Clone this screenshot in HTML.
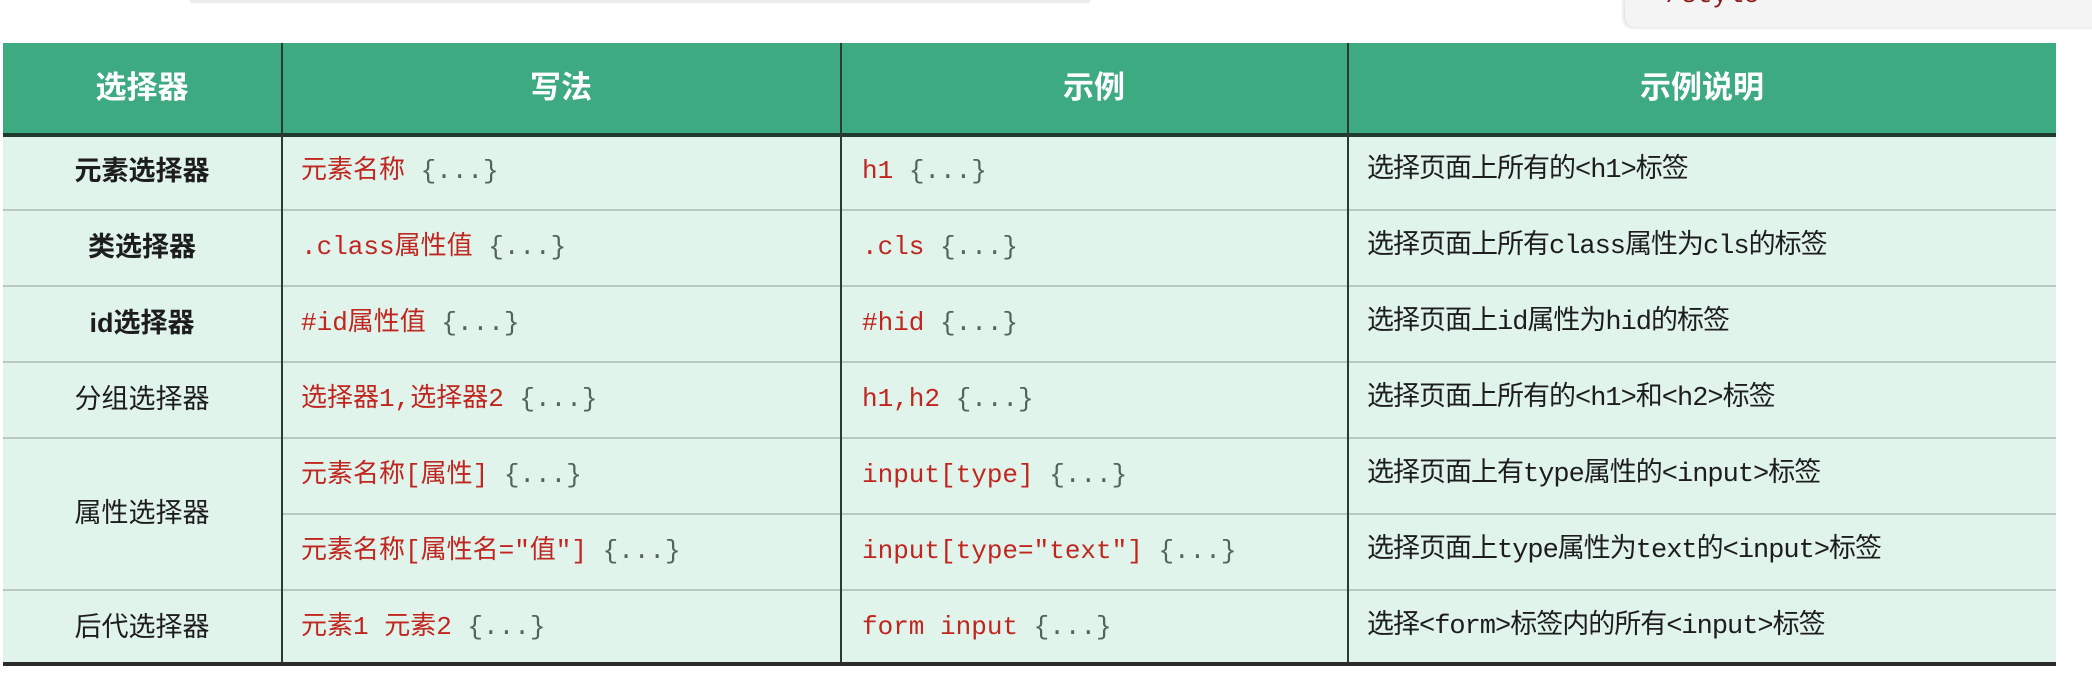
<!DOCTYPE html>
<html><head><meta charset="utf-8"><style>
html,body{margin:0;padding:0;width:2092px;height:675px;overflow:hidden;background:#fff;position:relative;font-family:"Liberation Sans","Noto Sans CJK SC",sans-serif;}
.codebox{position:absolute;left:1625px;top:-10px;width:480px;height:37px;background:#f4f4f4;border-radius:10px;box-shadow:-2px 1px 3px rgba(0,0,0,0.12);}
.codebox span{position:absolute;left:25px;top:-10px;font:26px "Liberation Mono",monospace;color:#8b1a1a;}
.topline{position:absolute;left:190px;top:0;width:900px;height:3px;background:#ececec;}
.tbl{position:absolute;left:3px;top:43px;width:2053px;height:622px;background:#e1f4ec;}
.hdr{position:absolute;left:0;top:0;width:100%;height:90px;background:#3daa82;border-bottom:4px solid #1f3b30;}
.vl{position:absolute;top:0;width:2px;height:622px;background:#2c3a34;}
.hl{position:absolute;height:2px;background:#b8c8c0;}
.c{position:absolute;font-size:27px;color:#1d1d1d;line-height:40px;white-space:nowrap;}
.h{color:#fff;font-weight:bold;font-size:31px;text-align:center;}
.b{font-weight:bold;}
.m{font-family:"Liberation Mono","Noto Sans CJK SC",monospace;color:#c0261f;font-size:26px;}
.d{font-family:"Liberation Mono","Noto Sans CJK SC",monospace;font-size:27px;letter-spacing:-1px;}
.g{color:#55625d;}
.bot{position:absolute;left:3px;top:662px;width:2053px;height:4px;background:#2c2c2c;}
</style></head><body>
<div class="topline"></div>
<div class="codebox"><span>&lt;/style&gt;</span></div>
<div class="tbl">
<div class="hdr"></div>
<div class="hl" style="left:0;width:2053px;top:166px"></div>
<div class="hl" style="left:0;width:2053px;top:242px"></div>
<div class="hl" style="left:0;width:2053px;top:318px"></div>
<div class="hl" style="left:0;width:2053px;top:394px"></div>
<div class="hl" style="left:278px;width:1775px;top:470px"></div>
<div class="hl" style="left:0;width:2053px;top:546px"></div>
<div class="vl" style="left:278px"></div>
<div class="vl" style="left:837px"></div>
<div class="vl" style="left:1344px"></div>
<div class="c h" style="left:0;width:278px;top:25px">选择器</div>
<div class="c h" style="left:279px;width:558px;top:25px">写法</div>
<div class="c h" style="left:838px;width:506px;top:25px">示例</div>
<div class="c h" style="left:1345px;width:708px;top:25px">示例说明</div>
</div>
<div style="position:absolute;left:3px;top:133px;">
<div class="c b" style="left:0;width:278px;text-align:center;top:18px">元素选择器</div>
<div class="c b" style="left:0;width:278px;text-align:center;top:94px">类选择器</div>
<div class="c b" style="left:0;width:278px;text-align:center;top:170px">id选择器</div>
<div class="c" style="left:0;width:278px;text-align:center;top:246px">分组选择器</div>
<div class="c" style="left:0;width:278px;text-align:center;top:360px">属性选择器</div>
<div class="c" style="left:0;width:278px;text-align:center;top:474px">后代选择器</div>

<div class="c m" style="left:298px;top:18px">元素名称 <span class="g">{...}</span></div>
<div class="c m" style="left:298px;top:94px">.class属性值 <span class="g">{...}</span></div>
<div class="c m" style="left:298px;top:170px">#id属性值 <span class="g">{...}</span></div>
<div class="c m" style="left:298px;top:246px">选择器1,选择器2 <span class="g">{...}</span></div>
<div class="c m" style="left:298px;top:322px">元素名称[属性] <span class="g">{...}</span></div>
<div class="c m" style="left:298px;top:398px">元素名称[属性名="值"] <span class="g">{...}</span></div>
<div class="c m" style="left:298px;top:474px">元素1 元素2 <span class="g">{...}</span></div>

<div class="c m" style="left:859px;top:18px">h1 <span class="g">{...}</span></div>
<div class="c m" style="left:859px;top:94px">.cls <span class="g">{...}</span></div>
<div class="c m" style="left:859px;top:170px">#hid <span class="g">{...}</span></div>
<div class="c m" style="left:859px;top:246px">h1,h2 <span class="g">{...}</span></div>
<div class="c m" style="left:859px;top:322px">input[type] <span class="g">{...}</span></div>
<div class="c m" style="left:859px;top:398px">input[type="text"] <span class="g">{...}</span></div>
<div class="c m" style="left:859px;top:474px">form input <span class="g">{...}</span></div>

<div class="c d" style="left:1364px;top:18px">选择页面上所有的&lt;h1&gt;标签</div>
<div class="c d" style="left:1364px;top:94px">选择页面上所有class属性为cls的标签</div>
<div class="c d" style="left:1364px;top:170px">选择页面上id属性为hid的标签</div>
<div class="c d" style="left:1364px;top:246px">选择页面上所有的&lt;h1&gt;和&lt;h2&gt;标签</div>
<div class="c d" style="left:1364px;top:322px">选择页面上有type属性的&lt;input&gt;标签</div>
<div class="c d" style="left:1364px;top:398px">选择页面上type属性为text的&lt;input&gt;标签</div>
<div class="c d" style="left:1364px;top:474px">选择&lt;form&gt;标签内的所有&lt;input&gt;标签</div>
</div>
<div class="bot"></div>
</body></html>
